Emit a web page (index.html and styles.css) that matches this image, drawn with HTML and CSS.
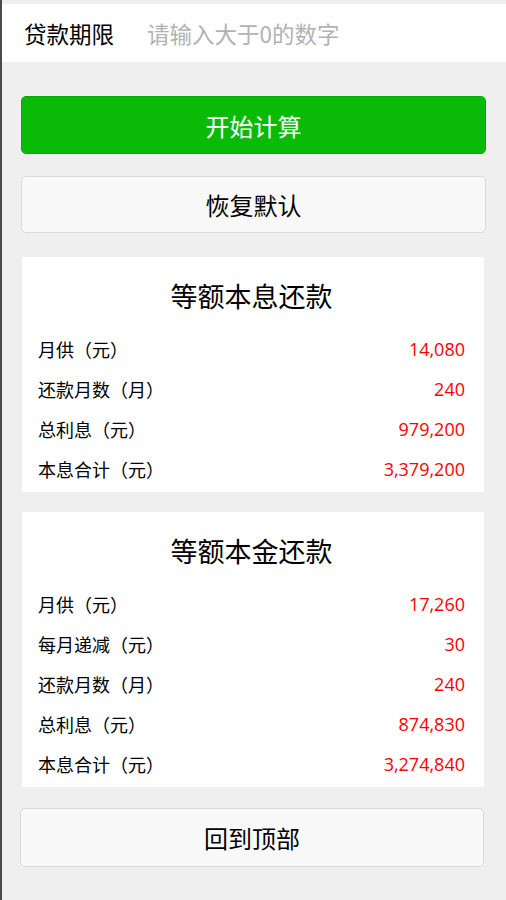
FILE: index.html
```html
<!doctype html>
<html>

<head>
    <meta charset="utf-8">
    <meta name="viewport" content="width=device-width, initial-scale=1">
    <title>房贷计算器</title>
    <link rel="stylesheet" href="styles.css">
</head>

<body>
    <div class="page">
        <div class="field">
            <label for="years">贷款期限</label>
            <input type="text" id="years" placeholder="请输入大于0的数字">
        </div>

        <div class="actions">
            <button class="btn btn-primary">开始计算</button>
            <button class="btn btn-default">恢复默认</button>
        </div>

        <div class="card">
            <h2>等额本息还款</h2>
            <div class="row"><span class="label">月供（元）</span><span class="value">14,080</span></div>
            <div class="row"><span class="label">还款月数（月）</span><span class="value">240</span></div>
            <div class="row"><span class="label">总利息（元）</span><span class="value">979,200</span></div>
            <div class="row"><span class="label">本息合计（元）</span><span class="value">3,379,200</span></div>
        </div>

        <div class="card">
            <h2>等额本金还款</h2>
            <div class="row"><span class="label">月供（元）</span><span class="value">17,260</span></div>
            <div class="row"><span class="label">每月递减（元）</span><span class="value">30</span></div>
            <div class="row"><span class="label">还款月数（月）</span><span class="value">240</span></div>
            <div class="row"><span class="label">总利息（元）</span><span class="value">874,830</span></div>
            <div class="row"><span class="label">本息合计（元）</span><span class="value">3,274,840</span></div>
        </div>

        <button class="btn btn-default btn-top">回到顶部</button>
    </div>
</body>

</html>
```

FILE: styles.css
```css
body {
    margin: 0;
    background-color: #efefef;
    font-family: "Noto Sans CJK SC", sans-serif;
    color: #000;
}
.page {
    border-left: 2px solid #4a4a4a;
    padding-top: 4px;
    min-height: 900px;
    box-sizing: border-box;
}
.field {
    display: flex;
    align-items: center;
    height: 58px;
    padding-left: 22px;
    background-color: #fff;
}
.field label {
    width: 123px;
    flex-shrink: 0;
    font-size: 22.5px;
}
.field input {
    flex: 1;
    min-width: 0;
    border: none;
    outline: none;
    padding: 0;
    font-size: 22.5px;
    font-family: "Noto Sans CJK SC", sans-serif;
    background: transparent;
}
.field input::placeholder {
    color: #b2b2b2;
}
.actions {
    display: flex;
    flex-direction: column;
    gap: 22px;
    padding: 34px 20px 0 19px;
}
.btn {
    display: block;
    width: 100%;
    height: 58px;
    border-radius: 5px;
    font-size: 24px;
    font-family: "Noto Sans CJK SC", sans-serif;
    cursor: pointer;
}
.btn-primary {
    background-color: #09bb07;
    border: 1px solid #07a906;
    color: #fff;
}
.btn-default {
    background-color: #f8f8f9;
    border: 1px solid #dadada;
    color: #000;
    height: 57px;
}
.card {
    background-color: #fff;
    margin: 24px 22px 0 20px;
    padding: 19px 19px 3px 16px;
}
.card + .card {
    margin-top: 20px;
}
.card h2 {
    margin: 0 0 13px;
    text-align: center;
    font-size: 27px;
    font-weight: 400;
    line-height: 40px;
}
.row {
    display: flex;
    justify-content: space-between;
    align-items: center;
    height: 40px;
}
.label {
    font-size: 18px;
}
.value {
    font-family: "Open Sans", sans-serif;
    font-size: 18px;
    color: #f00;
}
.btn-top {
    margin: 21px 22px 0 18px;
    width: calc(100% - 40px);
    height: 59px;
}
```
